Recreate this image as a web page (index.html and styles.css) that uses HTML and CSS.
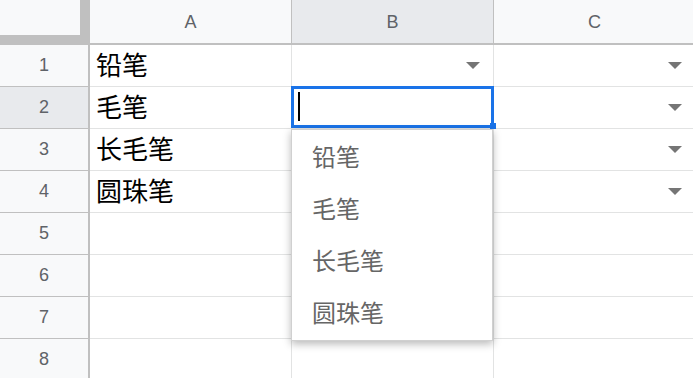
FILE: index.html
```html
<!DOCTYPE html>
<html lang="zh">
<head>
  <meta charset="UTF-8">
  <meta name="viewport" content="width=device-width, initial-scale=1.0">
  <title>下拉列表</title>
  <link rel="stylesheet" href="styles.css">
</head>
<body>
  <div class="sheet">
    <div class="corner"><div class="corner-box"></div></div>
    <div class="col-head">A</div>
    <div class="col-head active">B</div>
    <div class="col-head">C</div>

    <div class="row-head">1</div>
    <div class="cell">铅笔</div>
    <div class="cell has-list"><span class="arrow"></span></div>
    <div class="cell has-list"><span class="arrow"></span></div>

    <div class="row-head active">2</div>
    <div class="cell">毛笔</div>
    <div class="cell editing">
      <div class="editor"><span class="caret"></span></div>
      <ul class="dropdown">
        <li>铅笔</li>
        <li>毛笔</li>
        <li>长毛笔</li>
        <li>圆珠笔</li>
      </ul>
    </div>
    <div class="cell has-list"><span class="arrow"></span></div>

    <div class="row-head">3</div>
    <div class="cell">长毛笔</div>
    <div class="cell"></div>
    <div class="cell has-list"><span class="arrow"></span></div>

    <div class="row-head">4</div>
    <div class="cell">圆珠笔</div>
    <div class="cell"></div>
    <div class="cell has-list"><span class="arrow"></span></div>

    <div class="row-head">5</div>
    <div class="cell"></div>
    <div class="cell"></div>
    <div class="cell"></div>

    <div class="row-head">6</div>
    <div class="cell"></div>
    <div class="cell"></div>
    <div class="cell"></div>

    <div class="row-head">7</div>
    <div class="cell"></div>
    <div class="cell"></div>
    <div class="cell"></div>

    <div class="row-head">8</div>
    <div class="cell"></div>
    <div class="cell"></div>
    <div class="cell"></div>
  </div>
</body>
</html>
```

FILE: styles.css
```css
* {
  margin: 0;
  padding: 0;
  box-sizing: border-box;
}

body {
  background: #fff;
  overflow: hidden;
  font-family: "Liberation Sans", "Noto Sans CJK SC", sans-serif;
}

/* Grid */
.sheet {
  display: grid;
  grid-template-columns: 90px 202px 202px 202px;
  grid-template-rows: 45px repeat(8, 42px);
}

.corner {
  background: #c0c0c0;
}

.corner-box {
  width: 80px;
  height: 35px;
  background: #f8f9fa;
}

.col-head {
  display: flex;
  align-items: center;
  justify-content: center;
  padding-top: 1px;
  background: #f8f9fa;
  border-right: 1px solid #c0c0c0;
  border-bottom: 2px solid #c0c0c0;
  color: #5f6368;
  font-size: 18px;
}

.row-head {
  display: flex;
  align-items: center;
  justify-content: center;
  background: #f8f9fa;
  border-right: 2px solid #c0c0c0;
  border-bottom: 1px solid #c0c0c0;
  color: #5f6368;
  font-size: 18px;
}

.col-head.active,
.row-head.active {
  background: #e8eaed;
}

.cell {
  display: flex;
  align-items: center;
  padding: 0 6px;
  border-right: 1px solid #e2e3e3;
  border-bottom: 1px solid #e2e3e3;
  color: #000;
  font-size: 26px;
  line-height: 1;
}

.cell.has-list {
  justify-content: flex-end;
  padding-right: 13px;
}

.arrow {
  width: 0;
  height: 0;
  border-left: 7px solid transparent;
  border-right: 7px solid transparent;
  border-top: 7px solid #757575;
}

/* Active cell editor */
.cell.editing {
  position: relative;
}

.editor {
  position: absolute;
  top: -1px;
  left: -1px;
  width: 203px;
  height: 42px;
  padding: 3px 0 0 4px;
  border: 3px solid #1a73e8;
  background: #fff;
  z-index: 2;
}

.editor::after {
  content: "";
  position: absolute;
  right: -5px;
  bottom: -4px;
  width: 6px;
  height: 6px;
  background: #1a73e8;
}

.caret {
  display: block;
  width: 2px;
  height: 29px;
  background: #000;
}

.dropdown {
  position: absolute;
  top: 42px;
  left: -1px;
  width: 202px;
  padding: 2px 0 0;
  list-style: none;
  background: #fff;
  border: 1px solid #d0d0d0;
  box-shadow: 0 3px 8px rgba(0, 0, 0, 0.28);
  z-index: 3;
}

.dropdown li {
  display: flex;
  align-items: center;
  height: 52px;
  padding-left: 20px;
  color: #666;
  font-size: 24px;
  line-height: 1;
}
```
